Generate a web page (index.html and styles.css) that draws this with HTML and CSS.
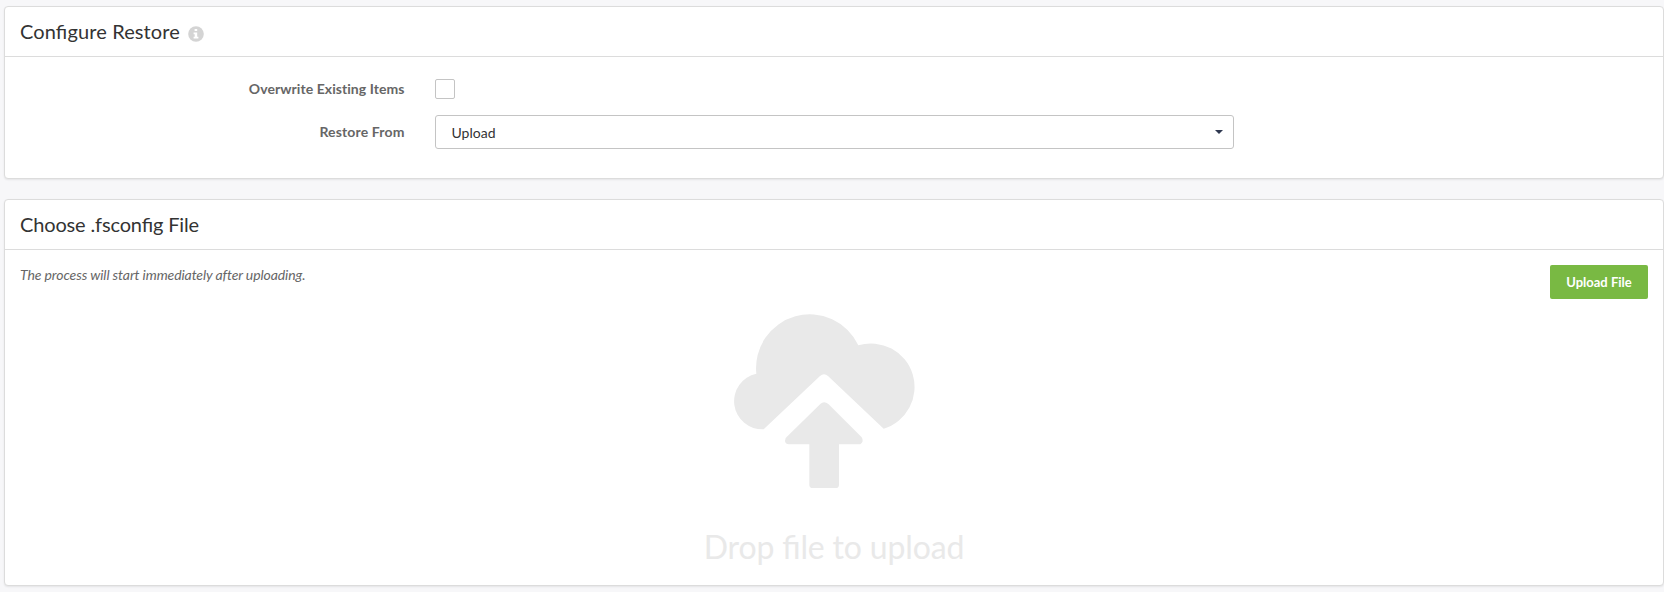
FILE: index.html
```html
<!DOCTYPE html>
<html lang="en">
<head>
<meta charset="utf-8">
<title>Configure Restore</title>
<link rel="stylesheet" href="styles.css">
</head>
<body>
<main class="page">
  <section class="card card-config">
    <header class="card-header">
      <h2>Configure Restore</h2>
      <svg class="info" viewBox="0 0 16 16" aria-label="Information"><circle cx="8" cy="8" r="7.8" fill="#d4d4d4"/><path d="M6.6 3.1h2.6v2H6.6zM5.6 6.4h3.6v4.3h1.2v1.8H5.6v-1.8h1.1V8.2H5.6z" fill="#fff"/></svg>
    </header>
    <form class="form">
      <label class="label" for="overwrite">Overwrite Existing Items</label>
      <input class="checkbox" id="overwrite" type="checkbox">
      <span class="label label-source">Restore From</span>
      <div class="select"><span>Upload</span><svg class="caret" viewBox="0 0 8 4"><path d="M0 0h8L4 4z" fill="#2f3850"/></svg></div>
    </form>
  </section>
  <section class="card card-upload">
    <header class="card-header"><h2>Choose .fsconfig File</h2></header>
    <div class="toolbar">
      <p class="hint">The process will start immediately after uploading.</p>
      <button class="button" type="button">Upload File</button>
    </div>
    <div class="dropzone">
      <svg class="cloud" viewBox="42 41 543 525" fill="#e9e9e9">
        <path d="M131 387A84.5 84.5 0 0 1 109 220A161 161 0 0 1 415 135A128 128 0 0 1 491 385L324 227Q312 216 300 227Z"/>
        <path d="M301 311Q312 301 325 311L425 411Q433 424 421 432H357V553Q357 563 347 563H278Q268 563 268 553V432H206Q191 430 197 413Z"/>
      </svg>
      <p class="drop-text">Drop file to upload</p>
    </div>
  </section>
</main>
</body>
</html>
```
FILE: styles.css
```css
* { box-sizing: border-box; }
body { margin: 0; background: #f7f7f9; font-family: Lato, "Liberation Sans", sans-serif; font-size: 14px; color: #333; }
h2, p { margin: 0; }
.page { height: 592px; padding: 6px 0 0 4px; display: flex; flex-direction: column; gap: 20px; overflow: hidden; }
.card { background: #fff; border: 1px solid #dcdcdc; border-radius: 4px; box-shadow: 0 1px 2px rgba(0, 0, 0, .08); }
.card-config { height: 173px; }
.card-upload { height: 387px; }
.card-header { height: 50px; padding: 0 15px; display: flex; align-items: center; gap: 8px; border-bottom: 1px solid #dcdcdc; }
.card-header h2 { font-size: 20px; line-height: 24px; font-weight: 400; padding-bottom: 2px; font-feature-settings: "liga" 1; }
.card-config h2 { letter-spacing: .12px; }
.card-upload h2 { letter-spacing: -.15px; }
.info { width: 16px; height: 16px; margin-top: 4px; }
.form { display: grid; grid-template-columns: 400px 799px; grid-template-rows: 20px 34px; column-gap: 30px; row-gap: 16px; padding-top: 22px; align-items: center; }
.label { text-align: right; font-weight: 700; line-height: 20px; letter-spacing: .06px; padding-right: .5px; color: #666; }
.label-source { letter-spacing: .14px; }
.checkbox { appearance: none; width: 20px; height: 20px; margin: 0; border: 1px solid #c4c4c4; border-radius: 2px; background: #fff; }
.select { height: 34px; padding: 0 10px 0 15.5px; border: 1px solid #c4c4c4; border-radius: 3px; display: flex; align-items: center; justify-content: space-between; }
.caret { width: 8px; height: 4px; margin-top: -1px; }
.toolbar { display: flex; justify-content: space-between; align-items: flex-start; padding: 15px 15px 0; }
.hint { font-style: italic; line-height: 20px; letter-spacing: -.1px; color: #666; }
.button { width: 98px; height: 34px; padding: 0; border: 0; border-radius: 2px; background: #79b943; color: #fff; font: 700 13px Lato, "Liberation Sans", sans-serif; }
.dropzone { display: flex; flex-direction: column; align-items: center; padding-top: 15px; }
.cloud { width: 181px; height: 175px; margin-right: 19px; overflow: visible; }
.drop-text { margin-top: 37px; font-size: 32px; line-height: 42px; letter-spacing: -.15px; font-feature-settings: "liga" 1; color: #e9e9e9; }
```
